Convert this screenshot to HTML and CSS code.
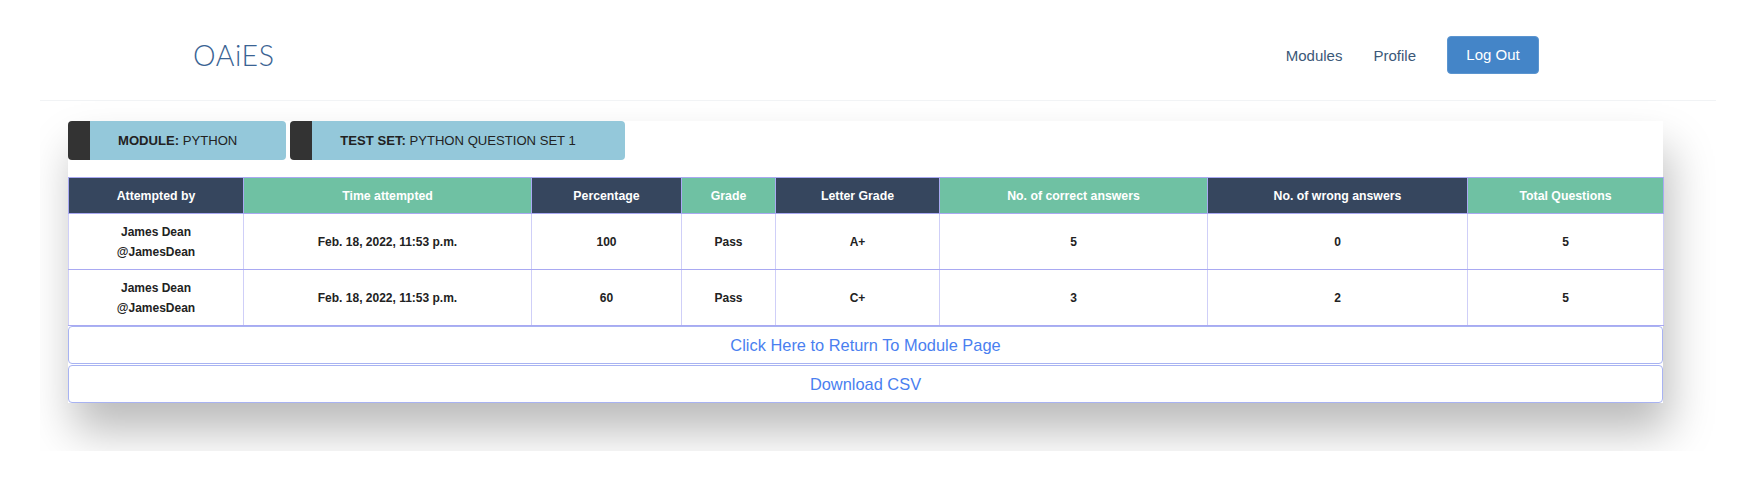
FILE: index.html
```html
<!DOCTYPE html>
<html lang="en">
<head>
<meta charset="utf-8">
<title>OAiES - Test Results</title>
<link rel="stylesheet" href="styles.css">
</head>
<body>
<div class="page">
  <header class="navbar">
    <a class="brand" href="#">OAiES</a>
    <nav class="nav">
      <a class="nav-link" href="#">Modules</a>
      <a class="nav-link" href="#">Profile</a>
      <a class="btn-logout" href="#">Log Out</a>
    </nav>
  </header>
  <main class="stage">
    <section class="card">
      <div class="badges">
        <div class="badge"><b>MODULE:</b> PYTHON</div>
        <div class="badge"><b>TEST SET:</b> PYTHON QUESTION SET 1</div>
      </div>
      <table class="results">
        <colgroup>
          <col class="c1"><col class="c2"><col class="c3"><col class="c4">
          <col class="c5"><col class="c6"><col class="c7"><col class="c8">
        </colgroup>
        <thead>
          <tr>
            <th class="dark">Attempted by</th>
            <th class="green">Time attempted</th>
            <th class="dark">Percentage</th>
            <th class="green">Grade</th>
            <th class="dark">Letter Grade</th>
            <th class="green">No. of correct answers</th>
            <th class="dark">No. of wrong answers</th>
            <th class="green">Total Questions</th>
          </tr>
        </thead>
        <tbody>
          <tr>
            <td>James Dean<br>@JamesDean</td>
            <td>Feb. 18, 2022, 11:53 p.m.</td>
            <td>100</td>
            <td>Pass</td>
            <td>A+</td>
            <td>5</td>
            <td>0</td>
            <td>5</td>
          </tr>
          <tr>
            <td>James Dean<br>@JamesDean</td>
            <td>Feb. 18, 2022, 11:53 p.m.</td>
            <td>60</td>
            <td>Pass</td>
            <td>C+</td>
            <td>3</td>
            <td>2</td>
            <td>5</td>
          </tr>
        </tbody>
      </table>
      <a class="action" href="#">Click Here to Return To Module Page</a>
      <a class="action" href="#">Download CSV</a>
    </section>
  </main>
</div>
</body>
</html>
```

FILE: styles.css
```css
* { box-sizing: border-box; }

html, body {
  margin: 0;
  padding: 0;
  background: #ffffff;
}

body {
  font-family: "Liberation Sans", Arial, Helvetica, sans-serif;
  color: #222;
}

a { text-decoration: none; }

.page {
  width: 1676px;
  margin: 0 auto;
}

.navbar {
  height: 101px;
  display: flex;
  align-items: center;
  justify-content: space-between;
  padding: 10px 177px 0 153px;
  border-bottom: 1px solid #f1f3f5;
}

.brand {
  font-family: "Lato", "Open Sans", sans-serif;
  font-weight: 300;
  font-size: 28.5px;
  letter-spacing: 0.6px;
  color: #3a6393;
}

.nav {
  display: flex;
  align-items: center;
  gap: 31px;
}

.nav-link {
  font-size: 15px;
  color: #3b5878;
}

.btn-logout {
  display: block;
  width: 92px;
  height: 38px;
  line-height: 36px;
  text-align: center;
  font-size: 15px;
  color: #fff;
  background: #4485c8;
  border: 1px solid #5b95d0;
  border-radius: 4px;
}

.stage {
  overflow: hidden;
  padding: 20px 53px 48px 28px;
}

.card {
  background: #fff;
  box-shadow: 6px 28px 42px rgba(0, 0, 0, 0.27);
}

.badges {
  display: flex;
  gap: 4px;
  margin-bottom: 17px;
}

.badge {
  height: 39px;
  line-height: 39px;
  font-size: 13.1px;
  color: #222;
  background: #94c8da;
  border-left: 22px solid #333333;
  border-radius: 4px;
  padding: 0 49px 0 28px;
}

.results {
  width: 100%;
  border-collapse: collapse;
  border: 1px solid #a9a9f2;
  table-layout: fixed;
}

.c1 { width: 175px; }
.c2 { width: 288px; }
.c3 { width: 150px; }
.c4 { width: 94px; }
.c5 { width: 164px; }
.c6 { width: 268px; }
.c7 { width: 260px; }
.c8 { width: 196px; }

.results th {
  height: 36px;
  font-size: 12.3px;
  font-weight: bold;
  color: #fff;
  text-align: center;
  border: 1px solid #a9a9f2;
  padding: 0 6px;
}

.results th.dark { background: #36465e; }
.results th.green { background: #6fc1a3; }

.results td {
  height: 56px;
  font-size: 12px;
  font-weight: bold;
  line-height: 20px;
  color: #222;
  text-align: center;
  border: 1px solid #cfcff8;
  border-bottom-color: #a9a9f2;
  padding: 0 6px;
}

.action {
  display: block;
  height: 38px;
  line-height: 36px;
  text-align: center;
  font-size: 16.4px;
  color: #4a7ff0;
  border: 1px solid #a8b3f2;
  border-radius: 4px;
  margin-top: 1px;
}

.results + .action { margin-top: 0; }
```
